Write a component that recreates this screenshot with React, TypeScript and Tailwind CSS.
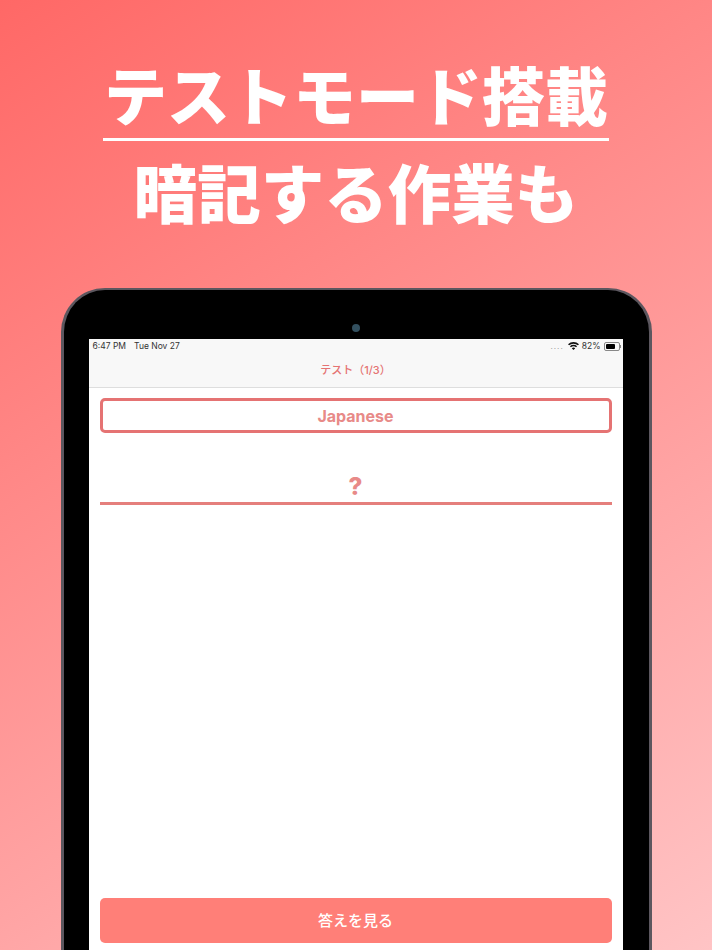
const jp = "font-['Inter','Noto_Sans_CJK_JP',sans-serif]";

function WifiIcon() {
  return (
    <svg width="11" height="8" viewBox="0 0 22 16" fill="#111">
      <path d="M11 16 7.6 12.4a5 5 0 0 1 6.8 0z" />
      <path d="M5.9 10.6 3.8 8.4a10.6 10.6 0 0 1 14.4 0l-2.1 2.2a7.6 7.6 0 0 0-10.2 0z" />
      <path d="M2.2 6.7 0 4.4a16 16 0 0 1 22 0l-2.2 2.3a13 13 0 0 0-17.6 0z" />
    </svg>
  );
}

function Battery() {
  return (
    <div className="flex items-center">
      <div className="w-[16px] h-[9px] rounded-[2px] border border-[#888] p-[1px]">
        <div className="w-[82%] h-full bg-black rounded-[1px]" />
      </div>
      <div className="w-[1px] h-[3px] bg-[#888]" />
    </div>
  );
}

function StatusBar() {
  return (
    <div className="h-[14px] flex items-center justify-between pl-[4px] pr-[2px] text-[8.5px] leading-none text-[#333] font-['Inter','Liberation_Sans',sans-serif]">
      <div className="flex gap-[8px]">
        <span>6:47 PM</span>
        <span>Tue Nov 27</span>
      </div>
      <div className="flex items-center gap-[3px]">
        <span className="tracking-[1px] text-[#999] text-[8px] mr-[1px]">....</span>
        <WifiIcon />
        <span>82%</span>
        <Battery />
      </div>
    </div>
  );
}

export default function App() {
  return (
    <div className={`w-[712px] h-[950px] overflow-hidden flex flex-col items-center bg-[linear-gradient(147deg,#ff6866,#ffc4c5)] ${jp}`}>
      <div className="mt-[66px] flex flex-col items-center text-white font-black leading-none">
        <div className="w-[506px] h-[75px] border-b-[3px] border-[#fff] flex justify-center whitespace-nowrap text-[63px] leading-none">テストモード搭載</div>
        <div className="mt-[22px] text-[63.5px] leading-[63px]">暗記する作業も</div>
      </div>

      <div className="mt-[62px] w-[591px] h-[800px] shrink-0 bg-black rounded-t-[44px] border-t-[2px] border-x-[3px] border-[#5c575f] pt-[47px] px-[25px]">
        <div className="-mt-[13px] mb-[7px] mx-auto w-[8px] h-[8px] rounded-full bg-[#33505f]" />
        <div className="w-[534px] h-full bg-white">
          <div className="h-[49px] bg-[#f8f8f8] border-b border-[#dedede]">
            <StatusBar />
            <div className="h-[34px] flex items-center justify-center text-[11px] font-medium text-[#e57373]">テスト（1/3）</div>
          </div>
          <div className="px-[11px] pt-[10px] flex flex-col">
            <div className="h-[35px] border-[3px] border-[#e57373] rounded-[5px] flex items-center justify-center text-[16px] font-bold text-[#e88a88]">
              Japanese
            </div>
            <div className="h-[72px] border-b-[3px] border-[#e57f7c] flex items-end justify-center pb-[3px] text-[24px] leading-none font-extrabold text-[#e88a88]">
              ?
            </div>
            <div className="mt-[393px] h-[45px] rounded-[5px] bg-[#ff7f78] flex items-center justify-center pt-[2px] text-[15px] font-medium text-[#fff]">
              答えを見る
            </div>
          </div>
        </div>
      </div>
    </div>
  );
}
